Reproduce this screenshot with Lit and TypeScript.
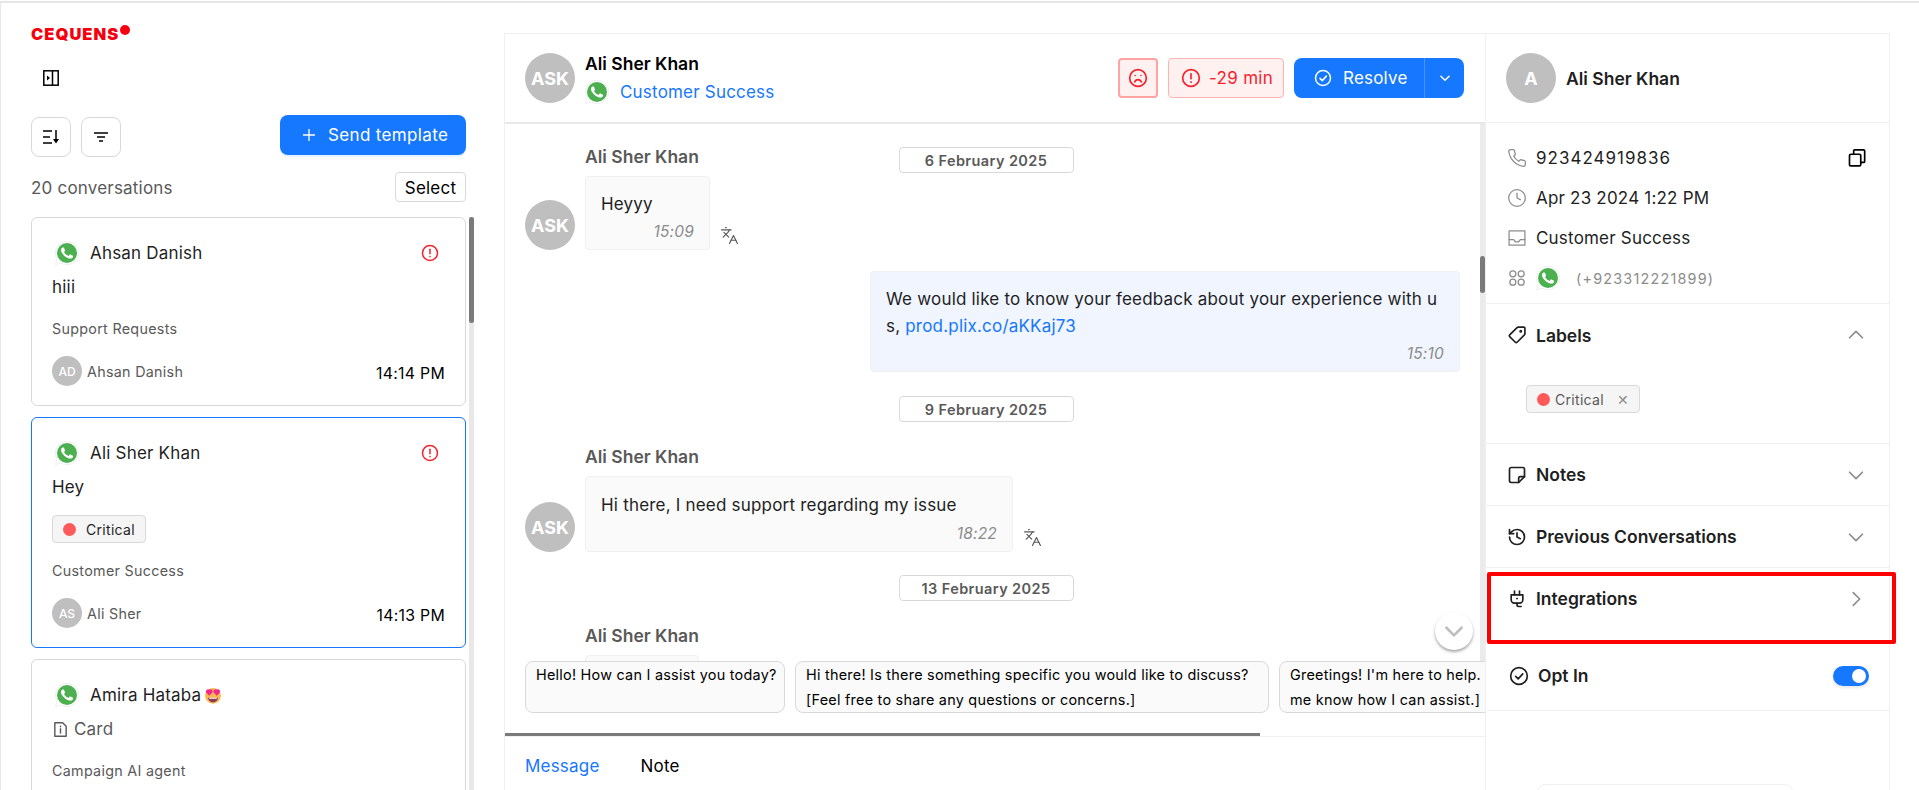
import { LitElement, html, css, svg } from "lit";
import { customElement } from "lit/decorators.js";

const ic = (body: unknown, size = 18, sw = 2, cls = "") => html`<svg class=${cls} width=${size} height=${size} viewBox="0 0 24 24" fill="none" stroke="currentColor" stroke-width=${sw} stroke-linecap="round" stroke-linejoin="round">${body}</svg>`;

const I = {
  alert: svg`<circle cx="12" cy="12" r="10"/><path d="M12 7v6"/><path d="M12 16.500v.5"/>`,
  sad: svg`<circle cx="12" cy="12" r="10"/><path d="M16 16.500s-1.500-2.500-4-2.500-4 2.500-4 2.500"/><path d="M8.500 9h.01M15.500 9h.01"/>`,
  check: svg`<circle cx="12" cy="12" r="10"/><path d="m8 12.500 3 3 5.500-6"/>`,
  phone: svg`<path d="M22 16.920v3a2 2 0 0 1-2.180 2 19.790 19.790 0 0 1-8.630-3.070 19.500 19.500 0 0 1-6-6 19.790 19.790 0 0 1-3.070-8.670A2 2 0 0 1 4.110 2h3a2 2 0 0 1 2 1.720 12.840 12.840 0 0 0 .7 2.810 2 2 0 0 1-.45 2.110L8.090 9.910a16 16 0 0 0 6 6l1.270-1.270a2 2 0 0 1 2.110-.45 12.840 12.840 0 0 0 2.810.7A2 2 0 0 1 22 16.920z"/>`,
  clock: svg`<circle cx="12" cy="12" r="10"/><path d="M12 6v6l4 2"/>`,
  inbox: svg`<rect x="2.500" y="3.500" width="19" height="17"/><path d="M2.500 14H8l2 2.500h4l2-2.500h5.500"/>`,
  apps: svg`<circle cx="7" cy="7" r="3.600"/><circle cx="17" cy="7" r="3.600"/><circle cx="7" cy="17" r="3.600"/><circle cx="17" cy="17" r="3.600"/>`,
  copy: svg`<rect x="3" y="7.500" width="13.500" height="14" rx="1.500"/><path d="M8 7.500V3.500A1.200 1.200 0 0 1 9.200 2.300H20a1.200 1.200 0 0 1 1.200 1.200v12.500a1.200 1.200 0 0 1-1.200 1.200h-3.500"/>`,
  tag: svg`<path d="M13.500 2.500H20a1.500 1.500 0 0 1 1.500 1.500v6.500a2 2 0 0 1-.6 1.400l-8.800 8.800a1.500 1.500 0 0 1-2.100 0L3.200 14a1.500 1.500 0 0 1 0-2.100l8.900-8.800a2 2 0 0 1 1.400-.6z"/><circle cx="16.500" cy="7.500" r=".8"/>`,
  note: svg`<path d="M3 5a2 2 0 0 1 2-2h14a2 2 0 0 1 2 2v9l-7 7H5a2 2 0 0 1-2-2z"/><path d="M14 21v-5a2 2 0 0 1 2-2h5"/>`,
  history: svg`<path d="M3 12a9 9 0 1 0 9-9 9.750 9.750 0 0 0-6.740 2.740L3 8"/><path d="M3 3v5h5"/><path d="M12 7v5l4 2"/>`,
  plug: svg`<path d="M9 7V2.500M15 7V2.500"/><path d="M5 7h14v6a4 4 0 0 1-4 4H9a4 4 0 0 1-4-4z"/><path d="M12 17v2a2 2 0 0 0 2 2h3"/><path d="M11.800 11.500h.4"/>`,
  down: svg`<path d="m5 9 7 7 7-7"/>`,
  up: svg`<path d="m5 15 7-7 7 7"/>`,
  right: svg`<path d="m9 5 7 7-7 7"/>`,
  lang: svg`<path d="m5 8 6 6"/><path d="m4 14 6-6 2-3"/><path d="M2 5h12"/><path d="M7 2h1"/><path d="m22 22-5-10-5 10"/><path d="M14 18h6"/>`,
  doc: svg`<path d="M4 2.500h11l5 5v14H4z"/><path d="M12 11v6"/><path d="M12 7.500v.5"/>`,
};

const wa = (size = 24) => html`<svg class="wa" width=${size} height=${size} viewBox="0 0 24 24">
  <path d="M12 .4a11.600 11.600 0 0 0-10 17.300L.5 23.600l6-1.500A11.600 11.600 0 1 0 12 .4z" fill="#fff" stroke="#e8e8e8" stroke-width=".7"/>
  <circle cx="12" cy="12" r="10" fill="#4caf50"/>
  <path fill="#fff" d="M17.472 14.382c-.297-.149-1.758-.867-2.030-.967-.273-.099-.471-.148-.670.150-.197.297-.767.966-.940 1.164-.173.199-.347.223-.644.075-.297-.150-1.255-.463-2.390-1.475-.883-.788-1.480-1.761-1.653-2.059-.173-.297-.018-.458.130-.606.134-.133.298-.347.446-.520.149-.174.198-.298.298-.497.099-.198.050-.371-.025-.520-.075-.149-.669-1.612-.916-2.207-.242-.579-.487-.5-.669-.510-.173-.008-.371-.010-.570-.010-.198 0-.520.074-.792.372-.272.297-1.040 1.016-1.040 2.479 0 1.462 1.065 2.875 1.213 3.074.149.198 2.096 3.200 5.077 4.487.709.306 1.262.489 1.694.625.712.227 1.360.195 1.871.118.571-.085 1.758-.719 2.006-1.413.248-.694.248-1.289.173-1.413-.074-.124-.272-.198-.570-.347z"/>
</svg>`;

const emoji = html`<svg class="emoji" width="18" height="18" viewBox="0 0 24 24">
  <circle cx="12" cy="13" r="10.500" fill="#f8b84e"/>
  <path d="M5.500 15.500h13c0 3.500-3 6-6.500 6s-6.500-2.500-6.500-6z" fill="#8a3a5a"/>
  <path d="M7 15.500h10v1.500H7z" fill="#fff"/>
  <path d="M7 13 2.800 8.800a3 3 0 0 1 4.200-4 3 3 0 0 1 4.200 4zM17 13l-4.200-4.200a3 3 0 0 1 4.200-4 3 3 0 0 1 4.200 4z" fill="#f0298f"/>
</svg>`;

interface Conv { name: string; msg?: string; doc?: boolean; dept: string; agent?: string; initials?: string; time?: string; alert?: boolean; label?: boolean; active?: boolean; emoji?: boolean }

const convs: Conv[] = [
  { name: "Ahsan Danish", msg: "hiii", dept: "Support Requests", agent: "Ahsan Danish", initials: "AD", time: "14:14 PM", alert: true },
  { name: "Ali Sher Khan", msg: "Hey", dept: "Customer Success", agent: "Ali Sher", initials: "AS", time: "14:13 PM", alert: true, label: true, active: true },
  { name: "Amira Hataba", doc: true, msg: "Card", dept: "Campaign AI agent", emoji: true },
];

@customElement("app-root")
export class AppRoot extends LitElement {
  static styles = css`
    :host { display: block; height: 790px; overflow: hidden; background: #fff; font-family: Inter, "Noto Sans", sans-serif; color: #1f1f1f; font-size: 17px; letter-spacing: .2px; padding-top: 1px; box-sizing: border-box; }
    * { box-sizing: border-box; }
    svg { display: block; flex: none; }
    .topline { height: 2px; background: #e6e6e6; }
    .row { display: flex; height: 787px; }

    .side { width: 504px; flex: none; border-left: 1px solid #e8e8e8; padding-left: 30px; display: flex; flex-direction: column; overflow: hidden; }
    .logo { margin-top: 20px; height: 20px; display: flex; align-items: flex-start; color: #f4000f; font-weight: 900; font-size: 16.500px; letter-spacing: 1px; line-height: 22px; }
    .logo i { width: 10px; height: 10px; border-radius: 50%; background: #f4000f; margin: 2px 0 0 1px; }
    .toggle { margin: 27px 0 0 12px; height: 17px; }
    .tools { margin-top: 28px; width: 435px; display: flex; align-items: flex-start; height: 42px; }
    .sq { width: 40px; height: 40px; margin-top: 2px; border: 1px solid #d9d9d9; border-radius: 8px; display: grid; place-items: center; margin-right: 10px; color: #000; }
    .send { margin-left: auto; width: 186px; height: 40px; border-radius: 8px; background: #1677ff; color: #fff; display: flex; align-items: center; gap: 13px; padding-left: 23px; letter-spacing: .35px; box-shadow: 0 2px 0 rgba(5,145,255,.1); }
    .count-row { width: 435px; margin-top: 15px; height: 30px; display: flex; align-items: center; justify-content: space-between; }
    .count { color: #595959; padding-top: 1px; }
    .select { width: 71px; height: 30px; border: 1px solid #d9d9d9; border-radius: 4px; color: #000; display: grid; place-items: center; padding-top: 1px; }
    .list-wrap { margin-top: 15px; display: flex; gap: 3px; flex: 1; overflow: hidden; }
    .list { width: 435px; display: flex; flex-direction: column; gap: 11px; }
    .track { width: 5px; background: #e8e8e8; }
    .thumb { height: 106px; background: #7a7a7a; border-radius: 3px; }
    .card { border: 1px solid #d9d9d9; border-radius: 6px; padding: 23px 20px 19px; flex: none; }
    .card.active { border-color: #1677ff; }
    .head { height: 24px; display: flex; align-items: center; padding-left: 3px; }
    .head .nm { margin-left: 11px; }
    .emoji { margin-left: 3px; }
    .alert { margin-left: auto; margin-right: 6px; color: #f5222d; }
    .msg { margin-top: 10px; line-height: 24px; height: 24px; display: flex; align-items: center; gap: 5px; }
    .msg.doc { color: #595959; }
    .chip { margin-top: 16px; margin-bottom: -2px; width: 94px; height: 28px; background: #f5f5f5; border: 1px solid #d9d9d9; border-radius: 4px; display: flex; align-items: center; gap: 10px; padding-left: 10px; font-size: 14px; letter-spacing: .3px; }
    .dot { width: 13px; height: 13px; border-radius: 50%; background: #ff5a5a; flex: none; }
    .dept { margin-top: 19px; font-size: 14.300px; line-height: 22px; color: #595959; letter-spacing: .3px; }
    .foot { margin-top: 16px; display: flex; align-items: center; gap: 5px; font-size: 14.300px; color: #595959; letter-spacing: .3px; }
    .av { width: 30px; height: 30px; border-radius: 50%; background: #bfbfbf; color: #fff; display: grid; place-items: center; font-size: 12px; font-weight: 500; flex: none; letter-spacing: 0; }
    .time { margin-left: auto; margin-top: 5px; color: #000; font-size: 15.800px; }

    .center { width: 981px; flex: none; margin-top: 30px; border-top: 1px solid #f0f0f0; border-left: 1px solid #f0f0f0; display: flex; flex-direction: column; min-height: 0; }
    .chead { height: 90px; border-bottom: 2px solid #e8e8e8; padding: 0 21px 0 20px; display: flex; align-items: center; }
    .big { width: 50px; height: 50px; border-radius: 50%; background: #bfbfbf; color: #fff; display: grid; place-items: center; font-weight: 700; font-size: 18px; flex: none; letter-spacing: 0; }
    .who { margin-left: 10px; padding-top: 2px; }
    .who b { display: block; font-weight: 600; font-size: 17.500px; color: #000; line-height: 24px; letter-spacing: 0; margin-top: -3px; }
    .who div { display: flex; align-items: center; gap: 11px; color: #1677ff; margin-top: 4px; }
    .acts { margin-left: auto; display: flex; gap: 10px; align-items: center; }
    .sadb { width: 40px; height: 40px; border: 2px solid #ffa3a3; background: #fff1f0; color: #f5222d; border-radius: 4px; display: grid; place-items: center; }
    .slab { width: 116px; height: 40px; border: 1px solid #ffb3b3; background: #fff1f0; color: #f5222d; border-radius: 4px; display: flex; align-items: center; gap: 8px; padding-left: 12px; letter-spacing: .3px; white-space: nowrap; }
    .res { width: 170px; height: 40px; background: #1677ff; color: #fff; border-radius: 8px; display: flex; align-items: center; }
    .res .l { width: 131px; border-right: 1px solid #4a94ff; height: 100%; display: flex; align-items: center; gap: 11px; padding-left: 20px; }
    .res .r { flex: 1; display: grid; place-items: center; }

    .cbody { height: 537px; display: flex; position: relative; flex: none; }
    .msgs { flex: 1; padding: 23px 20px 0; overflow: hidden; display: flex; flex-direction: column; }
    .vtrack { width: 5px; background: #ebebeb; }
    .vthumb { height: 37px; margin-top: 132px; background: #7a7a7a; border-radius: 3px; }
    .date { align-self: center; width: 175px; height: 26px; flex: none; border: 1px solid #d9d9d9; border-radius: 4px; display: grid; place-items: center; font-size: 14.500px; font-weight: 600; color: #595959; margin-bottom: 23px; margin-right: 13px; letter-spacing: .4px; }
    .date.first { margin-bottom: -28px; }
    .date.third { margin-top: 23px; }
    .m { display: flex; align-items: flex-end; flex: none; }
    .m .hidden { visibility: hidden; }
    .m .col { margin-left: 10px; }
    .sender { font-weight: 600; font-size: 17.500px; color: #595959; line-height: 24px; margin-bottom: 7px; letter-spacing: 0; }
    .bub { background: #fafafa; border: 1px solid #f0f0f0; border-radius: 4px; padding: 14px 15px 7px; line-height: 27px; }
    .b1 { width: 125px; }
    .ts { font-size: 15.500px; font-style: italic; color: #8c8c8c; line-height: 20px; margin-top: 4px; text-align: right; }
    .lang { color: #595959; margin: 0 0 5px 10px; }
    .out { align-self: flex-end; width: 590px; margin: 21px 0 24px; background: #f0f5ff; word-break: break-all; }
    .b2 { width: 428px; padding: 15px 15px 7px; }
    .b2 .ts { margin-top: 5px; }
    .b3 { width: 114px; height: 74px; }
    a { color: #1677ff; text-decoration: none; }
    .fab { position: absolute; left: 930px; top: 488px; width: 38px; height: 38px; border-radius: 50%; background: #fff; box-shadow: 0 2px 3px rgba(0,0,0,.35); color: #bfbfbf; display: grid; place-items: center; }

    .qr { height: 72px; flex: none; display: flex; gap: 10px; padding-left: 20px; overflow: hidden; }
    .q { flex: none; height: 52px; border: 1px solid #d9d9d9; background: #fafafa; border-radius: 8px; padding: 0 10px; font-size: 14.400px; line-height: 25px; white-space: nowrap; color: #000; letter-spacing: .25px; }
    .q1 { width: 260px; }
    .q2 { width: 474px; }
    .hbar { height: 3px; width: 755px; background: #7a7a7a; flex: none; }
    .tabs { border-top: 1px solid #f0f0f0; padding: 17px 20px 0; display: flex; gap: 41px; line-height: 24px; }
    .tabs .on { color: #1677ff; }
    .tabs span:last-child { color: #000; }

    .right { width: 405px; flex: none; margin-top: 30px; border: 1px solid #f0f0f0; border-bottom: none; position: relative; }
    .rhead { height: 89px; border-bottom: 1px solid #f0f0f0; padding: 0 20px; display: flex; align-items: center; gap: 10px; font-weight: 600; font-size: 17.500px; letter-spacing: 0; }
    .info { height: 181px; padding: 15px 22px 0 21px; border-bottom: 1px solid #f0f0f0; }
    .ir { height: 40px; display: flex; align-items: center; gap: 9px; }
    .ir svg.g { color: #8c8c8c; }
    .ir .num { letter-spacing: 1px; }
    .ir .cp { margin-left: auto; color: #000; }
    .ir .ph { font-size: 14.400px; color: #8c8c8c; margin-left: 7px; letter-spacing: 1.200px; }
    .sec { padding: 0 22px 0 21px; height: 62px; display: flex; align-items: center; gap: 9px; font-weight: 600; font-size: 17.500px; border-bottom: 1px solid #f0f0f0; letter-spacing: 0; }
    .sec .ch { margin-left: auto; color: #8c8c8c; }
    .sec.lab { border-bottom: none; }
    .sec.int { border-bottom: none; height: 61px; }
    .labs { height: 78px; border-bottom: 1px solid #f0f0f0; padding: 19px 0 0 40px; }
    .lchip { width: 114px; height: 28px; background: #f5f5f5; border: 1px solid #d9d9d9; border-radius: 4px; display: flex; align-items: center; padding-left: 10px; gap: 5px; font-size: 14px; color: #595959; letter-spacing: .3px; }
    .lchip .x { margin-left: 8px; color: #8c8c8c; }
    .opt { height: 82px; border-bottom: 1px solid #f0f0f0; display: flex; align-items: center; gap: 9px; padding: 12px 20px 0 23px; font-weight: 600; font-size: 17.500px; letter-spacing: 0; }
    .sw { margin-left: auto; width: 36px; height: 20px; border-radius: 10px; background: #1677ff; padding: 3px 3px 3px 19px; box-shadow: 0 2px 3px rgba(0,0,0,.1); }
    .sw i { display: block; width: 14px; height: 14px; border-radius: 50%; background: #fff; }
    .bottom { margin: 73px 0 0 50px; width: 258px; height: 30px; border: 1px solid #f0f0f0; border-radius: 10px 10px 0 0; }
    .redbox { position: absolute; left: 1px; top: 538px; width: 409px; height: 72px; border: 4px solid #ff0000; border-radius: 2px; pointer-events: none; }
  `;

  private card(c: Conv) {
    return html`<div class="card ${c.active ? "active" : ""}">
      <div class="head">${wa(24)}<span class="nm">${c.name}</span>${c.emoji ? emoji : ""}${c.alert ? ic(I.alert, 18, 2, "alert") : ""}</div>
      <div class="msg ${c.doc ? "doc" : ""}">${c.doc ? ic(I.doc, 17, 2) : ""}${c.msg}</div>
      ${c.label ? html`<div class="chip"><span class="dot"></span>Critical</div>` : ""}
      <div class="dept">${c.dept}</div>
      ${c.agent ? html`<div class="foot"><span class="av">${c.initials}</span><span>${c.agent}</span><span class="time">${c.time}</span></div>` : html`<div class="foot"><span class="av"></span></div>`}
    </div>`;
  }

  render() {
    return html`
      <div class="topline"></div>
      <div class="row">
        <aside class="side">
          <div class="logo">CEQUENS<i></i></div>
          <div class="toggle"><svg width="16" height="16" viewBox="0 0 16 16" fill="none" stroke="#000" stroke-width="1.500"><rect x=".8" y=".8" width="14.400" height="14.400"/><path d="M9.500 1v14"/><path d="M4 5.500 7 8l-3 2.500z" fill="#000" stroke="none"/></svg></div>
          <div class="tools">
            <div class="sq"><svg width="16" height="14" viewBox="0 0 16 14" fill="none" stroke="#000" stroke-width="1.500"><path d="M0 1h9M0 7h7M0 13h9M13 0v11"/><path d="m10 9 3 4.500L16 9z" fill="#000" stroke="none"/></svg></div>
            <div class="sq"><svg width="14" height="10" viewBox="0 0 14 10" fill="none" stroke="#000" stroke-width="1.500"><path d="M0 1h14M3 5h8M5 9h4"/></svg></div>
            <div class="send"><svg width="12" height="12" viewBox="0 0 12 12" stroke="#fff" stroke-width="1.300"><path d="M6 0v12M0 6h12"/></svg>Send template</div>
          </div>
          <div class="count-row"><span class="count">20 conversations</span><span class="select">Select</span></div>
          <div class="list-wrap">
            <div class="list">${convs.map((c) => this.card(c))}</div>
            <div class="track"><div class="thumb"></div></div>
          </div>
        </aside>

        <main class="center">
          <div class="chead">
            <div class="big">ASK</div>
            <div class="who"><b>Ali Sher Khan</b><div>${wa(24)}Customer Success</div></div>
            <div class="acts">
              <div class="sadb">${ic(I.sad, 20)}</div>
              <div class="slab">${ic(I.alert, 20)}<span>-29 min</span></div>
              <div class="res"><div class="l">${ic(I.check, 18)}Resolve</div><div class="r">${ic(I.down, 14, 2.500)}</div></div>
            </div>
          </div>
          <div class="cbody">
            <div class="msgs">
              <div class="date first">6 February 2025</div>
              <div class="m"><div class="big">ASK</div><div class="col"><div class="sender">Ali Sher Khan</div><div class="bub b1">Heyyy<div class="ts">15:09</div></div></div><span class="lang">${ic(I.lang, 19, 1.500)}</span></div>
              <div class="bub out">We would like to know your feedback about your experience with us, <a>prod.plix.co/aKKaj73</a><div class="ts">15:10</div></div>
              <div class="date">9 February 2025</div>
              <div class="m"><div class="big">ASK</div><div class="col"><div class="sender">Ali Sher Khan</div><div class="bub b2">Hi there, I need support regarding my issue<div class="ts">18:22</div></div></div><span class="lang">${ic(I.lang, 19, 1.500)}</span></div>
              <div class="date third">13 February 2025</div>
              <div class="m"><div class="big hidden"></div><div class="col"><div class="sender">Ali Sher Khan</div><div class="bub b3"></div></div></div>
            </div>
            <div class="vtrack"><div class="vthumb"></div></div>
            <div class="fab">${ic(I.down, 26, 2.500)}</div>
          </div>
          <div class="qr">
            <div class="q q1">Hello! How can I assist you today?</div>
            <div class="q q2">Hi there! Is there something specific you would like to discuss?<br />[Feel free to share any questions or concerns.]</div>
            <div class="q">Greetings! I'm here to help. Let<br />me know how I can assist.]</div>
          </div>
          <div class="hbar"></div>
          <div class="tabs"><span class="on">Message</span><span>Note</span></div>
        </main>

        <aside class="right">
          <div class="rhead"><div class="big">A</div>Ali Sher Khan</div>
          <div class="info">
            <div class="ir">${ic(I.phone, 20, 1.500, "g")}<span class="num">923424919836</span><span class="cp">${ic(I.copy, 20, 2)}</span></div>
            <div class="ir">${ic(I.clock, 20, 1.500, "g")}<span>Apr 23 2024 1:22 PM</span></div>
            <div class="ir">${ic(I.inbox, 20, 1.500, "g")}<span>Customer Success</span></div>
            <div class="ir">${ic(I.apps, 20, 1.500, "g")}${wa(24)}<span class="ph">(+923312221899)</span></div>
          </div>
          <div class="sec lab">${ic(I.tag, 20)}Labels<span class="ch">${ic(I.up, 22, 1.800)}</span></div>
          <div class="labs"><div class="lchip"><span class="dot"></span>Critical<span class="x">✕</span></div></div>
          <div class="sec">${ic(I.note, 20)}Notes<span class="ch">${ic(I.down, 22, 1.800)}</span></div>
          <div class="sec">${ic(I.history, 20)}Previous Conversations<span class="ch">${ic(I.down, 22, 1.800)}</span></div>
          <div class="sec int">${ic(I.plug, 20)}Integrations<span class="ch">${ic(I.right, 22, 1.800)}</span></div>
          <div class="opt">${ic(I.check, 20)}Opt In<span class="sw"><i></i></span></div>
          <div class="bottom"></div>
          <div class="redbox"></div>
        </aside>
      </div>
    `;
  }
}
